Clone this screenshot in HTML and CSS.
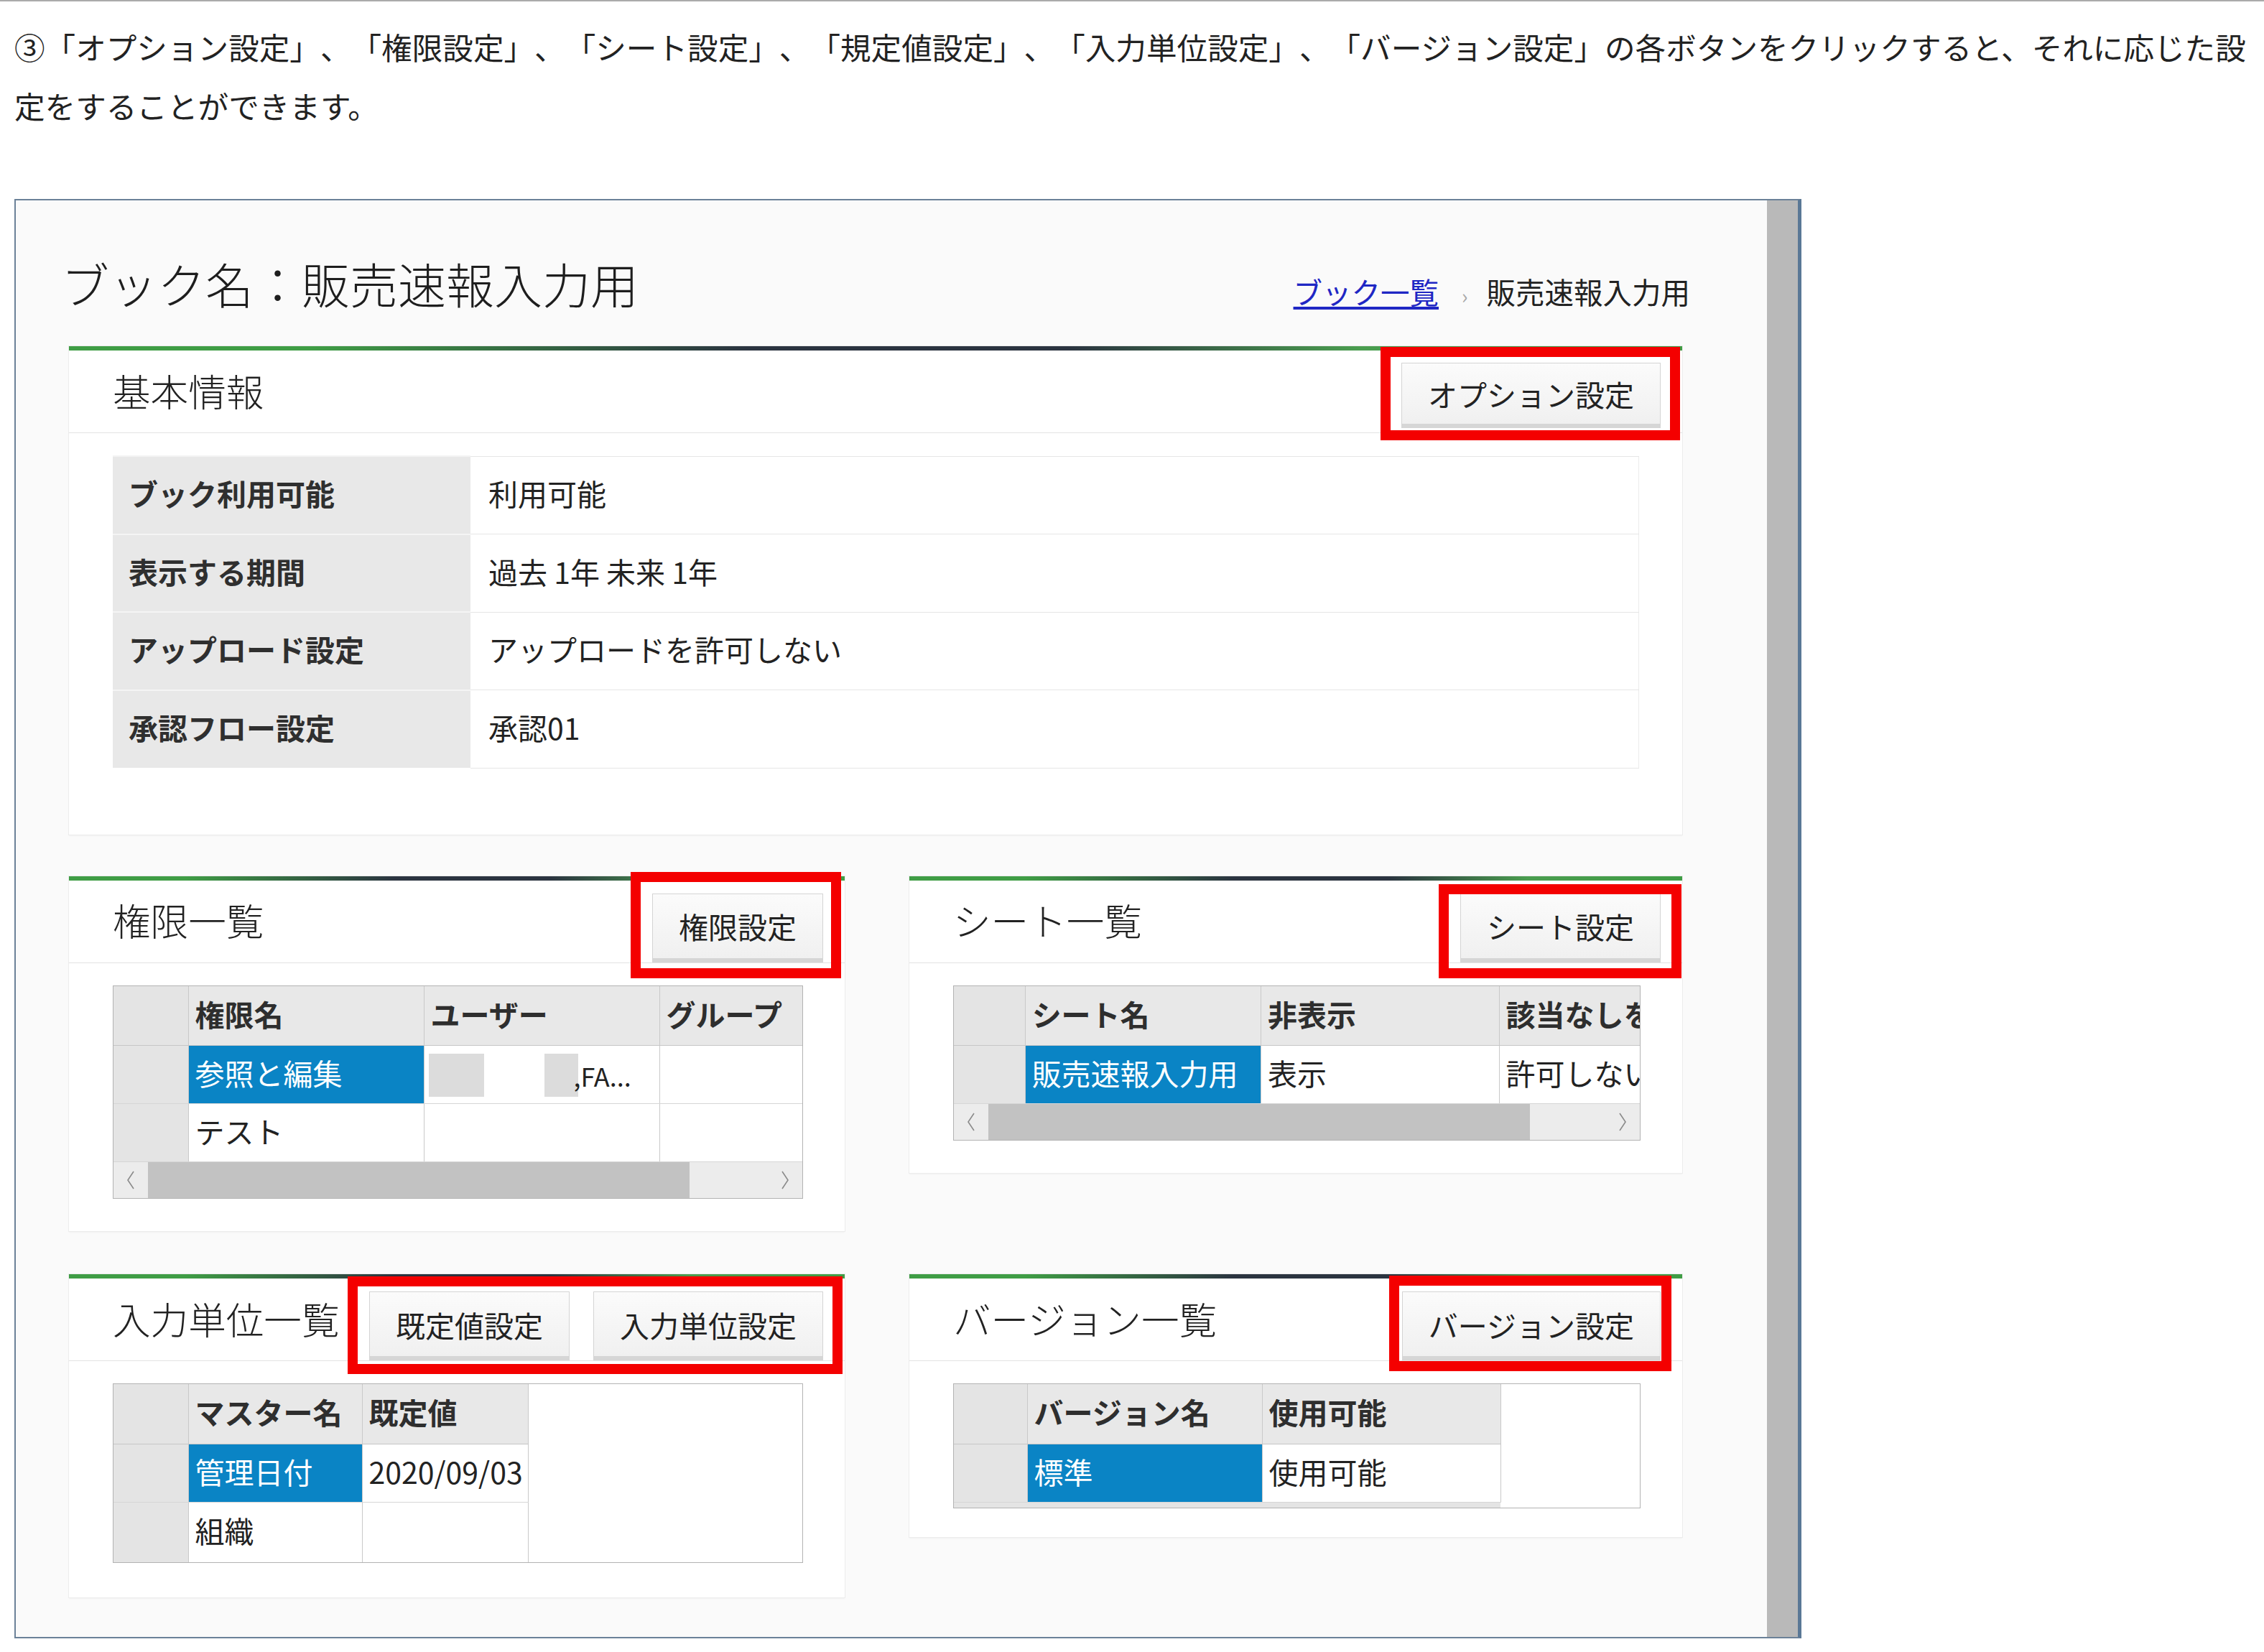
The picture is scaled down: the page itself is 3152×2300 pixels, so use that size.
FILE: index.html
```html
<!DOCTYPE html>
<html lang="ja">
<head>
<meta charset="utf-8">
<title>ブック名：販売速報入力用</title>
<link rel="stylesheet" href="styles.css">
</head>
<body>
<p class="intro">③「オプション設定」、「権限設定」、「シート設定」、「規定値設定」、「入力単位設定」、「バージョン設定」の各ボタンをクリックすると、それに応じた設<br>定をすることができます。</p>

<div class="shot">
  <div class="page">
    <header class="page-head">
      <h1>ブック名：販売速報入力用</h1>
      <nav class="crumbs"><a href="#">ブック一覧</a><span class="sep">›</span><span>販売速報入力用</span></nav>
    </header>

    <section class="panel">
      <div class="panel-head">
        <h2>基本情報</h2>
        <div class="actions actions-opt"><button class="btn btn-opt">オプション設定</button></div>
      </div>
      <div class="panel-body body-info">
        <table class="info">
          <tr><th>ブック利用可能</th><td>利用可能</td></tr>
          <tr><th>表示する期間</th><td>過去 1年 未来 1年</td></tr>
          <tr><th>アップロード設定</th><td>アップロードを許可しない</td></tr>
          <tr><th>承認フロー設定</th><td>承認01</td></tr>
        </table>
      </div>
    </section>

    <div class="grid">
      <section class="panel">
        <div class="panel-head">
          <h2>権限一覧</h2>
          <div class="actions actions-perm"><button class="btn">権限設定</button></div>
        </div>
        <div class="panel-body">
          <div class="dg">
            <table class="t-perm">
              <colgroup><col class="c-rh"><col class="c-328"><col class="c-328"><col class="c-328"></colgroup>
              <thead><tr><th class="rh"></th><th>権限名</th><th>ユーザー</th><th>グループ</th></tr></thead>
              <tbody>
                <tr><td class="rh"></td><td class="sel">参照と編集</td><td class="users"><span class="redact r1"></span><span class="redact r2"></span><span class="fa">,FA...</span></td><td></td></tr>
                <tr><td class="rh"></td><td>テスト</td><td></td><td></td></tr>
              </tbody>
            </table>
            <div class="hs"><span class="arr"><svg width="12" height="26" viewBox="0 0 12 26"><path d="M10 1 L2 13 L10 25" fill="none" stroke="#8a8a8a" stroke-width="1.6"/></svg></span><span class="thumb"></span><span class="fill"></span><span class="arr"><svg width="12" height="26" viewBox="0 0 12 26"><path d="M2 1 L10 13 L2 25" fill="none" stroke="#8a8a8a" stroke-width="1.6"/></svg></span></div>
          </div>
        </div>
      </section>

      <section class="panel">
        <div class="panel-head">
          <h2>シート一覧</h2>
          <div class="actions actions-sheet"><button class="btn">シート設定</button></div>
        </div>
        <div class="panel-body">
          <div class="dg">
            <table class="t-sheet">
              <colgroup><col class="c-rh2"><col class="c-328"><col class="c-331"><col class="c-328"></colgroup>
              <thead><tr><th class="rh"></th><th>シート名</th><th>非表示</th><th>該当なしを</th></tr></thead>
              <tbody>
                <tr><td class="rh"></td><td class="sel">販売速報入力用</td><td>表示</td><td>許可しない</td></tr>
              </tbody>
            </table>
            <div class="hs"><span class="arr"><svg width="12" height="26" viewBox="0 0 12 26"><path d="M10 1 L2 13 L10 25" fill="none" stroke="#8a8a8a" stroke-width="1.6"/></svg></span><span class="thumb"></span><span class="fill"></span><span class="arr"><svg width="12" height="26" viewBox="0 0 12 26"><path d="M2 1 L10 13 L2 25" fill="none" stroke="#8a8a8a" stroke-width="1.6"/></svg></span></div>
          </div>
        </div>
      </section>

      <section class="panel">
        <div class="panel-head">
          <h2>入力単位一覧</h2>
          <div class="actions actions-unit"><button class="btn">既定値設定</button><button class="btn">入力単位設定</button></div>
        </div>
        <div class="panel-body body-unit">
          <div class="dg">
            <table class="t-unit">
              <colgroup><col class="c-rh"><col class="c-242"><col class="c-231"></colgroup>
              <thead><tr><th class="rh"></th><th>マスター名</th><th>既定値</th></tr></thead>
              <tbody>
                <tr><td class="rh"></td><td class="sel">管理日付</td><td>2020/09/03</td></tr>
                <tr class="last"><td class="rh"></td><td>組織</td><td></td></tr>
              </tbody>
            </table>
          </div>
        </div>
      </section>

      <section class="panel">
        <div class="panel-head">
          <h2>バージョン一覧</h2>
          <div class="actions actions-ver"><button class="btn">バージョン設定</button></div>
        </div>
        <div class="panel-body body-ver">
          <div class="dg">
            <table class="t-ver">
              <colgroup><col class="c-rh3"><col class="c-327"><col class="c-332"></colgroup>
              <thead><tr><th class="rh"></th><th>バージョン名</th><th>使用可能</th></tr></thead>
              <tbody>
                <tr><td class="rh"></td><td class="sel">標準</td><td>使用可能</td></tr>
              </tbody>
            </table>
            <div class="strip"></div>
          </div>
        </div>
      </section>
    </div>
  </div>
  <div class="vscroll"></div>
</div>
</body>
</html>
```

FILE: styles.css
```css
* { box-sizing: border-box; }

html, body { margin: 0; }

body {
  width: 3152px;
  height: 2300px;
  overflow: hidden;
  background: #fff;
  border-top: 2px solid #ababab;
  padding-left: 20px;
  font-family: "Noto Sans CJK JP", "Noto Sans", sans-serif;
  color: #222;
  text-spacing-trim: space-all;
}

.intro {
  margin: 22px 0 0;
  font-size: 42.6px;
  line-height: 82px;
  white-space: nowrap;
  text-spacing-trim: space-all;
}

/* screenshot frame */
.shot {
  margin-top: 89px;
  width: 2488px;
  height: 2004px;
  display: flex;
  border: 2px solid #6b8198;
  border-right: 5px solid #5a7896;
}

.page {
  flex: 1;
  background: #fafafa;
  padding: 0 118px 0 74px;
}

.vscroll {
  width: 43px;
  background: #b9b9b9;
}

.page-head {
  display: flex;
  justify-content: space-between;
  align-items: baseline;
  margin: 0 -11px;
  padding-top: 70px;
  height: 203px;
}

.page-head h1 {
  margin: 0;
  font-size: 67px;
  font-weight: 300;
  line-height: 90px;
  color: #1e1e1e;
}

.crumbs {
  font-size: 40.5px;
  line-height: 50px;
  color: #222;
}

.crumbs a {
  color: #1f27c4;
  text-decoration: underline;
  text-underline-offset: 4px;
}

.crumbs .sep {
  margin: 0 26px 0 32px;
  font-size: 28px;
  color: #a8a8a8;
}

/* panels */
.panel {
  background: linear-gradient(90deg, #3f9d45 0%, #3f9d45 15%, #2b3440 42%, #2b3440 62%, #4a9d4f 80%, #3f9d45 100%) top left / 100% 6px no-repeat, #fff;
  padding-top: 6px;
  box-shadow: 0 0 0 1px #ececec, 0 2px 2px rgba(0, 0, 0, 0.04);
}

.panel-head {
  height: 115px;
  border-bottom: 1px solid #e3e3e3;
  display: flex;
  align-items: center;
  justify-content: space-between;
  padding: 0 30px 0 61px;
}

.panel-head h2 {
  margin: 0 0 4px;
  font-size: 52.6px;
  font-weight: 300;
  line-height: 1;
  color: #222;
}

.actions {
  position: relative;
  display: flex;
  gap: 33px;
  align-self: flex-end;
}

.actions::after {
  content: "";
  position: absolute;
  border: 14px solid #f40000;
  pointer-events: none;
}

.actions-opt { align-self: center; margin-top: 11px; }
.actions-opt::after { top: -22px; right: -27px; bottom: -17px; left: -29px; }
.actions-perm::after { top: -30px; right: -25px; bottom: -22px; left: -30px; }
.actions-sheet::after { top: -13px; right: -29px; bottom: -22px; left: -30px; }
.actions-unit::after { top: -21px; right: -27px; bottom: -19px; left: -30px; }
.actions-ver::after { top: -22px; right: -15px; bottom: -15px; left: -18px; }

.btn {
  height: 96px;
  padding: 0 36px;
  font-family: inherit;
  font-size: 41px;
  color: #222;
  background: linear-gradient(#fbfbfb, #f0f0f0);
  border: 1px solid #d4d4d4;
  border-bottom: 6px solid #d6d6d6;
  white-space: nowrap;
}

.btn-opt { height: 91px; }

.panel-body {
  padding: 31px 58px 45px 61px;
}

.body-info { padding: 31px 60px 92px 61px; }
.body-unit { padding-bottom: 48px; }
.body-ver { padding-bottom: 40px; }

/* basic info table */
.info {
  width: 100%;
  border-collapse: collapse;
  table-layout: fixed;
  border-right: 1px solid #ececec;
}

.info tr { height: 108.5px; }

.info th {
  width: 498px;
  background: #e8e8e8;
  text-align: left;
  padding: 0 0 6px 22px;
  font-size: 41px;
  font-weight: 700;
  color: #2f2f2f;
  border-top: 2px solid #f4f4f4;
}

.info td {
  padding: 0 0 6px 25px;
  font-size: 41px;
  background: #fff;
  border-top: 1px solid #e6e6e6;
  border-bottom: 1px solid #e6e6e6;
}

/* data grids */
.grid {
  display: grid;
  grid-template-columns: 1080px 1076px;
  column-gap: 90px;
  row-gap: 60px;
  margin-top: 58px;
  align-items: start;
}

.dg {
  border: 1px solid #b3b3b3;
  background: #fff;
  overflow: hidden;
}

.dg table {
  border-collapse: collapse;
  table-layout: fixed;
}

.t-perm, .t-sheet { width: 1088px; }
.t-unit { width: 577px; }
.t-ver { width: 761px; }

.c-rh { width: 104px; }
.c-rh2 { width: 99px; }
.c-rh3 { width: 102px; }
.c-328 { width: 328px; }
.c-331 { width: 331px; }
.c-327 { width: 327px; }
.c-332 { width: 332px; }
.c-242 { width: 242px; }
.c-231 { width: 231px; }

.dg th, .dg td {
  height: 81px;
  padding: 0 0 6px 9px;
  font-size: 41px;
  text-align: left;
  white-space: nowrap;
  overflow: hidden;
  color: #222;
  border-right: 1px solid #c9c9c9;
  border-bottom: 1px solid #d6d6d6;
}

.dg thead th {
  height: 83px;
  background: #e8e8e8;
  font-weight: 700;
  color: #2e2e2e;
  border-bottom: 1px solid #c6c6c6;
}

.dg .rh { background: #e4e4e4; }

.dg .sel {
  background: #0a84c5;
  color: #fff;
}

.dg td.users {
  padding-left: 6px;
  padding-bottom: 0;
  font-size: 36px;
}

.redact {
  display: inline-block;
  vertical-align: middle;
  height: 60px;
  background: #dcdcdc;
}

.redact.r1 { width: 77px; }
.redact.r2 { width: 47px; margin-left: 84px; }
.fa { vertical-align: middle; margin-left: -6px; }

.dg tr.last td { border-bottom: none; height: 84px; }

.hs {
  display: flex;
  height: 50px;
  background: #ececec;
}

.hs .arr {
  width: 48px;
  display: flex;
  align-items: center;
  justify-content: center;
}

.hs .thumb {
  width: 754px;
  background: #c2c2c2;
}

.hs .fill { flex: 1; }

.strip {
  width: 761px;
  height: 7px;
  background: #e4e4e4;
}
```
